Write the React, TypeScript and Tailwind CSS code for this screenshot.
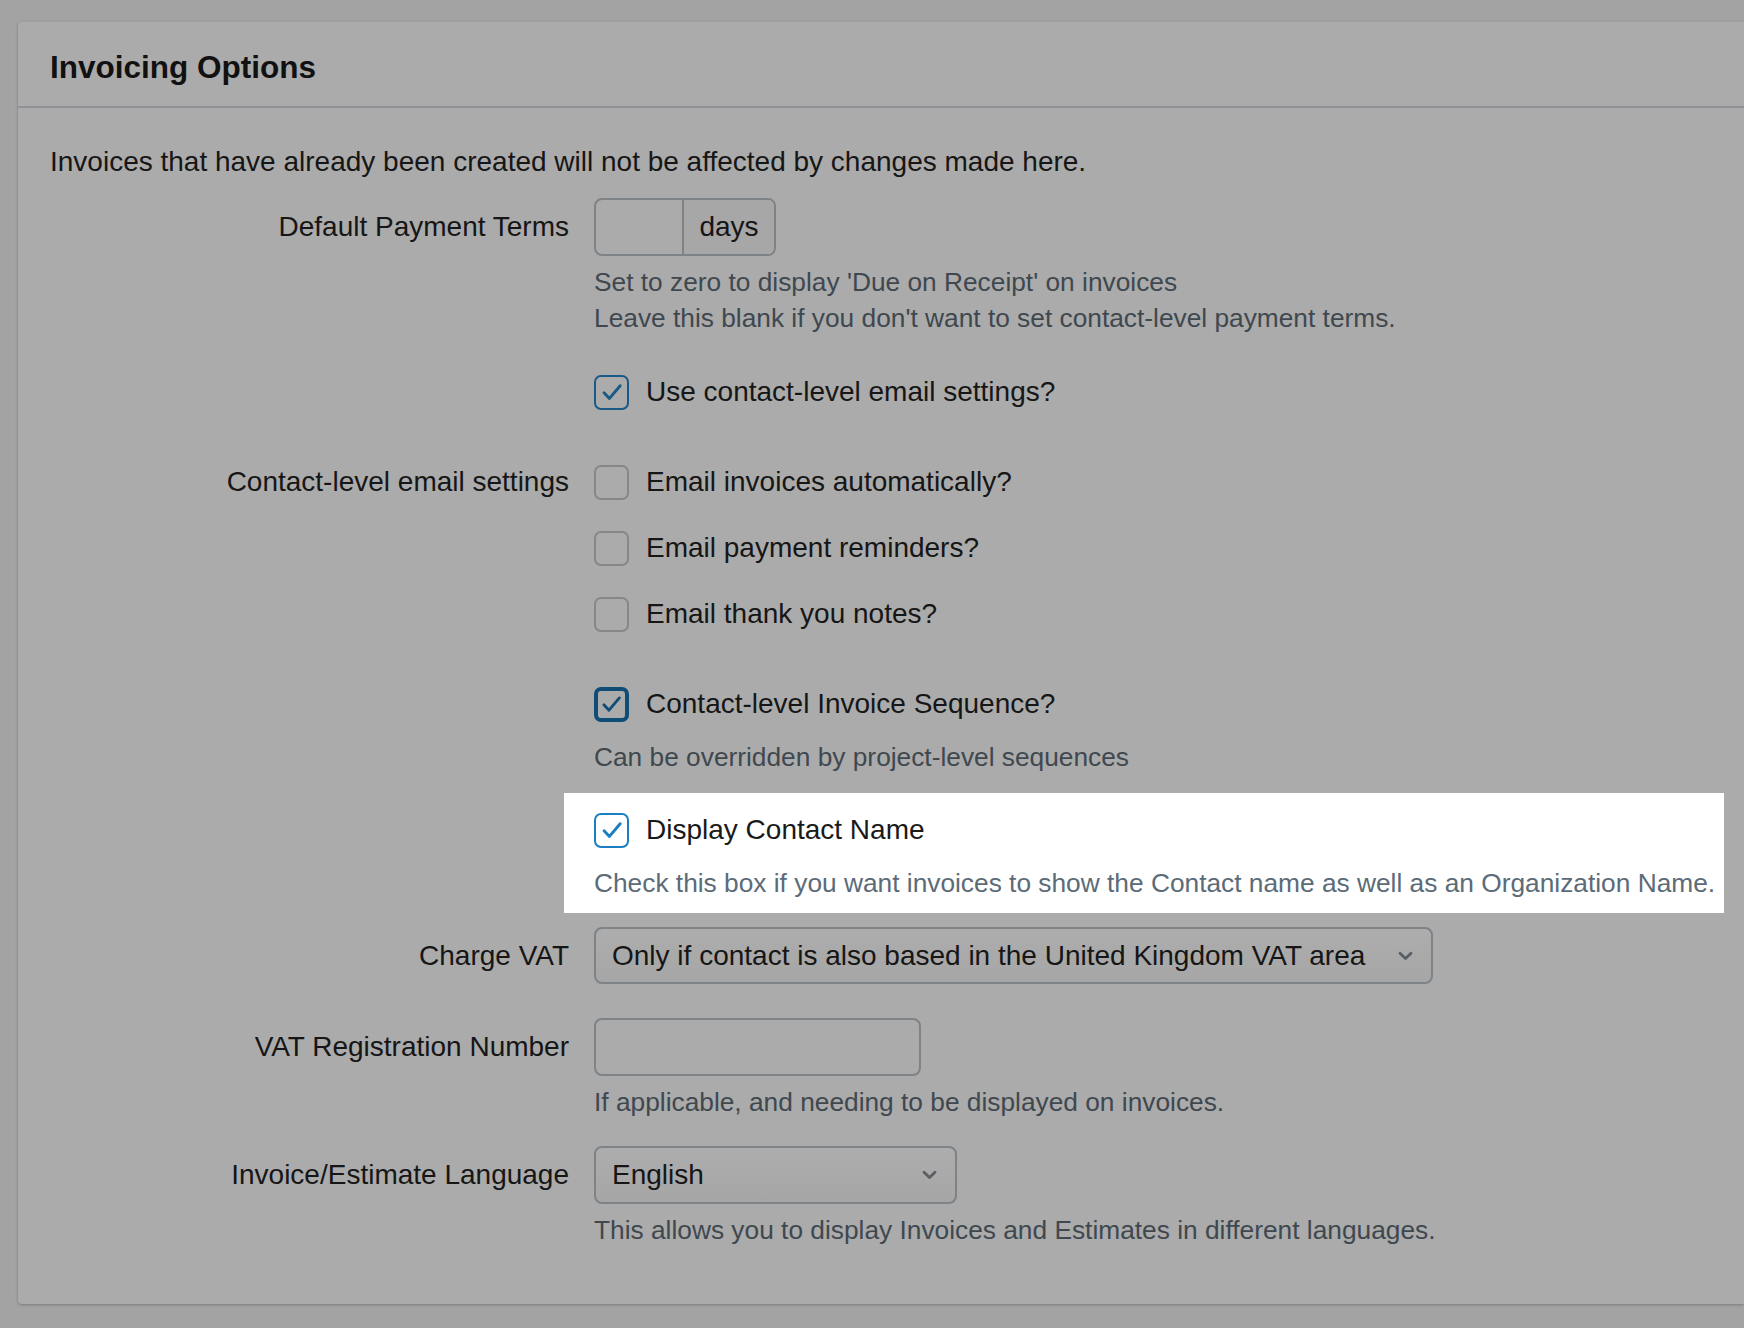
import React from "react";

type CbVariant = "dim" | "dimChecked" | "focus" | "bright";

function Check({ color }: { color: string }) {
  return (
    <svg width="28" height="28" viewBox="0 0 24 24" fill="none">
      <path d="M5.2 12.6l4.6 4.9L19 6.6" stroke={color} strokeWidth="2.5" strokeLinecap="round" strokeLinejoin="round" />
    </svg>
  );
}

function Checkbox({ variant }: { variant: CbVariant }) {
  if (variant === "dim") {
    return <div className="w-[35px] h-[35px] shrink-0 rounded-[7px] border-2 border-[#878787] bg-[#ababab]" />;
  }
  if (variant === "focus") {
    return (
      <div className="w-[35px] h-[35px] shrink-0 rounded-[7px] border-[4px] border-[#0f4c76] bg-[#ababab] flex items-center justify-center">
        <Check color="#0f4c76" />
      </div>
    );
  }
  if (variant === "bright") {
    return (
      <div className="w-[35px] h-[35px] shrink-0 rounded-[7px] border-2 border-[#1a7fc1] bg-white flex items-center justify-center">
        <Check color="#1a7fc1" />
      </div>
    );
  }
  return (
    <div className="w-[35px] h-[35px] shrink-0 rounded-[7px] border-2 border-[#1b5a86] bg-[#ababab] flex items-center justify-center">
      <Check color="#1b5a86" />
    </div>
  );
}

function CheckRow({ variant, text, className = "" }: { variant: CbVariant; text: string; className?: string }) {
  return (
    <div className={"flex items-center gap-[17px] h-[36px] " + className}>
      <Checkbox variant={variant} />
      <span className={variant === "bright" ? "text-[#1a1a1a]" : "text-[#161616]"}>{text}</span>
    </div>
  );
}

function Chevron() {
  return (
    <svg width="15" height="10" viewBox="0 0 15 10" fill="none">
      <path d="M2 2.2l5.5 5.3L13 2.2" stroke="#585e64" strokeWidth="2.8" strokeLinecap="round" strokeLinejoin="round" />
    </svg>
  );
}

function Label({ children }: { children: React.ReactNode }) {
  return <div className="w-[519px] shrink-0 text-right text-[#161616]">{children}</div>;
}

export default function App() {
  return (
    <div className="h-[1328px] overflow-hidden bg-[#a3a3a3] pt-[22px] pl-[18px] font-['Liberation_Sans',Arial,sans-serif]">
      <div className="bg-[#ababab] rounded-l-[4px] shadow-[0_1px_3px_rgba(0,0,0,0.25)] text-[28px] leading-[36px]">
        <div className="pt-[27px] pb-[21px] pl-[32px] border-b-2 border-[#8e9296]">
          <h1 className="text-[31.5px] leading-[36px] font-bold text-[#111111]">Invoicing Options</h1>
        </div>
        <div className="px-[32px] pt-[36px] pb-[56px]">
          <p className="text-[#161616]">Invoices that have already been created will not be affected by changes made here.</p>

          <div className="flex items-center mt-[18px]">
            <Label>Default Payment Terms</Label>
            <div className="ml-[25px] flex h-[58px] border-2 border-[#7e8388] rounded-[8px] overflow-hidden">
              <div className="w-[86px]" />
              <div className="w-[92px] border-l-2 border-[#7e8388] bg-[#a7a7a7] flex items-center justify-center text-[#161616]">days</div>
            </div>
          </div>
          <div className="ml-[544px] mt-[8px] text-[26.3px] leading-[36px] text-[#3f484f]">
            <div>Set to zero to display 'Due on Receipt' on invoices</div>
            <div>Leave this blank if you don't want to set contact-level payment terms.</div>
          </div>

          <CheckRow className="ml-[544px] mt-[38px]" variant="dimChecked" text="Use contact-level email settings?" />

          <div className="flex items-center mt-[54px] h-[36px]">
            <Label>Contact-level email settings</Label>
            <CheckRow className="ml-[25px]" variant="dim" text="Email invoices automatically?" />
          </div>
          <CheckRow className="ml-[544px] mt-[30px]" variant="dim" text="Email payment reminders?" />
          <CheckRow className="ml-[544px] mt-[30px]" variant="dim" text="Email thank you notes?" />

          <CheckRow className="ml-[544px] mt-[54px]" variant="focus" text="Contact-level Invoice Sequence?" />
          <div className="ml-[544px] mt-[17px] text-[26.3px] leading-[36px] text-[#3f484f]">Can be overridden by project-level sequences</div>

          <div className="ml-[514px] mt-[18px] w-[1160px] bg-white pl-[30px] pt-[19px] pb-[12px]">
            <CheckRow variant="bright" text="Display Contact Name" />
            <div className="mt-[17px] text-[26.3px] leading-[36px] text-[#5b6b78]">
              Check this box if you want invoices to show the Contact name as well as an Organization Name.
            </div>
          </div>

          <div className="flex items-center mt-[14px]">
            <Label>Charge VAT</Label>
            <div className="ml-[25px] w-[839px] h-[57px] border-2 border-[#7e8388] rounded-[8px] bg-gradient-to-b from-[#adadad] to-[#a6a6a6] flex items-center justify-between pl-[16px] pr-[18px] text-[#161616]">
              <span>Only if contact is also based in the United Kingdom VAT area</span>
              <Chevron />
            </div>
          </div>

          <div className="flex items-center mt-[34px]">
            <Label>VAT Registration Number</Label>
            <div className="ml-[25px] w-[327px] h-[58px] border-2 border-[#7e8388] rounded-[8px]" />
          </div>
          <div className="ml-[544px] mt-[8px] text-[26.3px] leading-[36px] text-[#3f484f]">If applicable, and needing to be displayed on invoices.</div>

          <div className="flex items-center mt-[26px]">
            <Label>Invoice/Estimate Language</Label>
            <div className="ml-[25px] w-[363px] h-[58px] border-2 border-[#7e8388] rounded-[8px] bg-gradient-to-b from-[#adadad] to-[#a6a6a6] flex items-center justify-between pl-[16px] pr-[18px] text-[#161616]">
              <span>English</span>
              <Chevron />
            </div>
          </div>
          <div className="ml-[544px] mt-[8px] text-[26.3px] leading-[36px] text-[#3f484f]">This allows you to display Invoices and Estimates in different languages.</div>
        </div>
      </div>
    </div>
  );
}
